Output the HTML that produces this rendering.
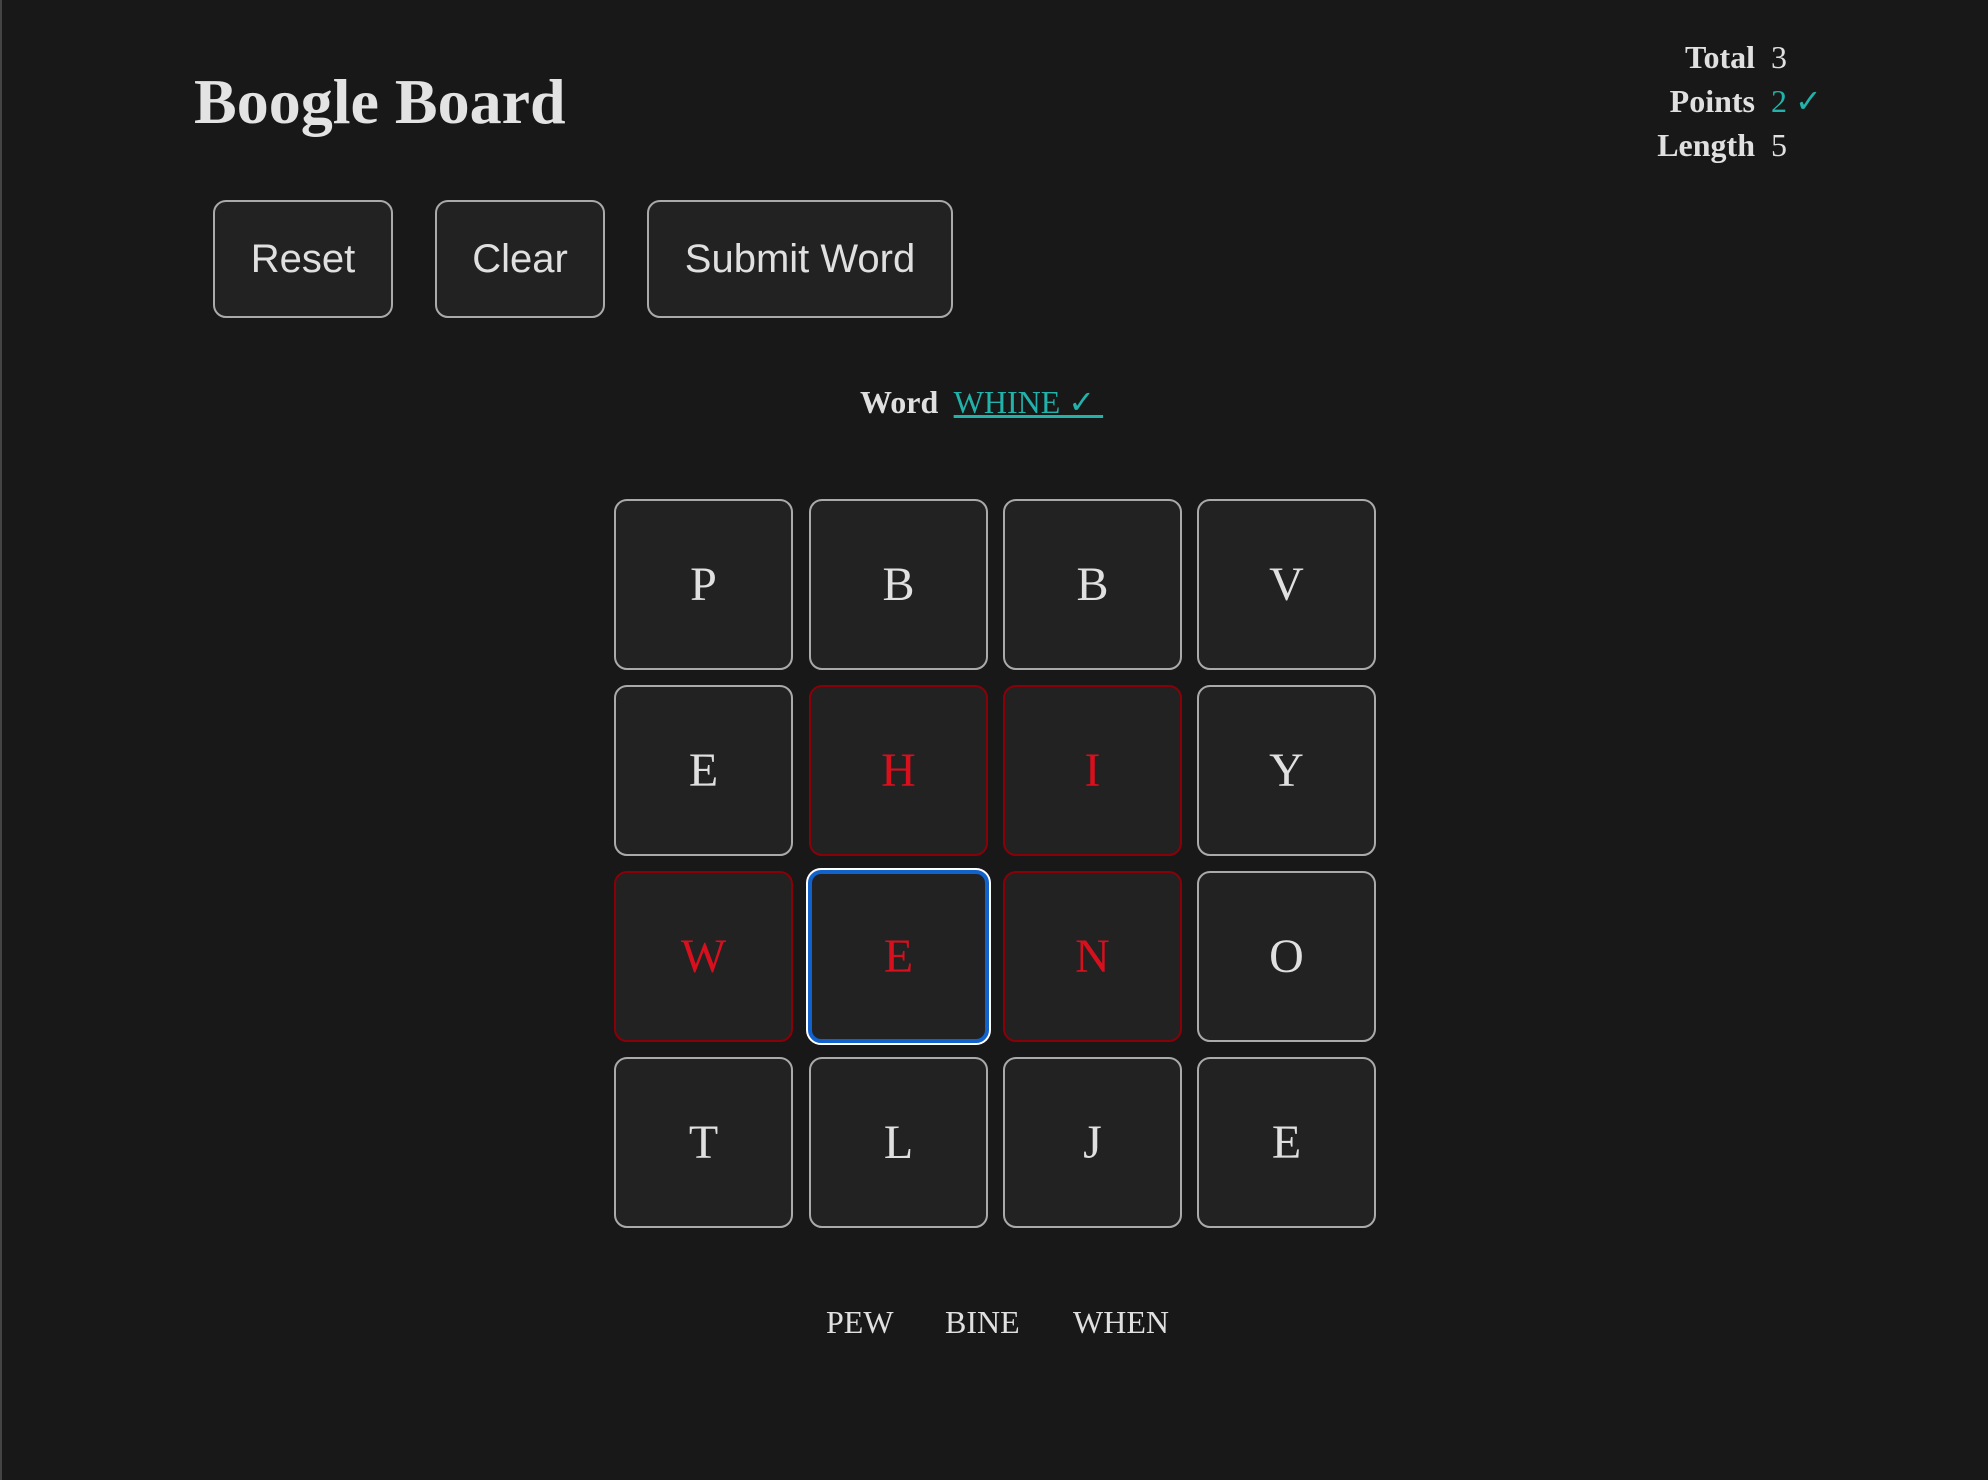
<!DOCTYPE html>
<html><head><meta charset="utf-8"><style>
html,body{margin:0;padding:0;width:1988px;height:1480px;overflow:hidden;background:#181818;}
body{position:relative;font-family:"Liberation Serif",serif;color:#e0e0e0;}
.abs{position:absolute;}
h1{position:absolute;left:194px;top:62px;margin:0;font-size:64px;line-height:80px;font-weight:bold;color:#e3e3e3;}
.btn{position:absolute;top:200px;height:118px;box-sizing:border-box;border:2px solid #aaa;border-radius:13px;background:#222;font-family:"Liberation Sans",sans-serif;font-size:40px;color:#e0e0e0;display:flex;align-items:center;justify-content:center;}
.tile{position:absolute;width:179px;height:171px;box-sizing:border-box;border:2px solid #aaa;border-radius:13px;background:#222;display:flex;align-items:center;justify-content:center;font-size:48px;color:#e0e0e0;}
.r{border-color:#8a0008;color:#d8101e;}
.sel{border:4px solid #1262cc;box-shadow:0 0 0 2px #fff;}
.teal{color:#22b2aa;}
</style></head><body>
<div class="abs" style="left:0;top:0;width:2px;height:1480px;background:#444;"></div>
<h1>Boogle Board</h1>

<div class="abs" style="left:1600px;top:35px;width:155px;font-size:32px;line-height:44px;font-weight:bold;text-align:right;">Total<br>Points<br>Length</div>
<div class="abs" style="left:1771px;top:35px;font-size:32px;line-height:44px;">3<br><span class="teal">2 ✓</span><br>5</div>

<div class="btn" style="left:213px;width:180px;">Reset</div>
<div class="btn" style="left:435px;width:170px;">Clear</div>
<div class="btn" style="left:647px;width:306px;">Submit Word</div>

<div class="abs" style="left:860px;top:380px;font-size:32px;line-height:44px;white-space:pre;"><b>Word</b>  <span class="teal" style="text-decoration:underline;">WHINE ✓ </span></div>

<div class="tile" style="left:614px;top:499px;">P</div>
<div class="tile" style="left:809px;top:499px;">B</div>
<div class="tile" style="left:1003px;top:499px;">B</div>
<div class="tile" style="left:1197px;top:499px;">V</div>

<div class="tile" style="left:614px;top:685px;">E</div>
<div class="tile r" style="left:809px;top:685px;">H</div>
<div class="tile r" style="left:1003px;top:685px;">I</div>
<div class="tile" style="left:1197px;top:685px;">Y</div>

<div class="tile r" style="left:614px;top:871px;">W</div>
<div class="tile r sel" style="left:808px;top:870px;width:181px;height:173px;">E</div>
<div class="tile r" style="left:1003px;top:871px;">N</div>
<div class="tile" style="left:1197px;top:871px;">O</div>

<div class="tile" style="left:614px;top:1057px;">T</div>
<div class="tile" style="left:809px;top:1057px;">L</div>
<div class="tile" style="left:1003px;top:1057px;">J</div>
<div class="tile" style="left:1197px;top:1057px;">E</div>

<div class="abs" style="left:826px;top:1300px;font-size:32px;line-height:44px;">PEW</div>
<div class="abs" style="left:945px;top:1300px;font-size:32px;line-height:44px;">BINE</div>
<div class="abs" style="left:1073px;top:1300px;font-size:32px;line-height:44px;">WHEN</div>
</body></html>
